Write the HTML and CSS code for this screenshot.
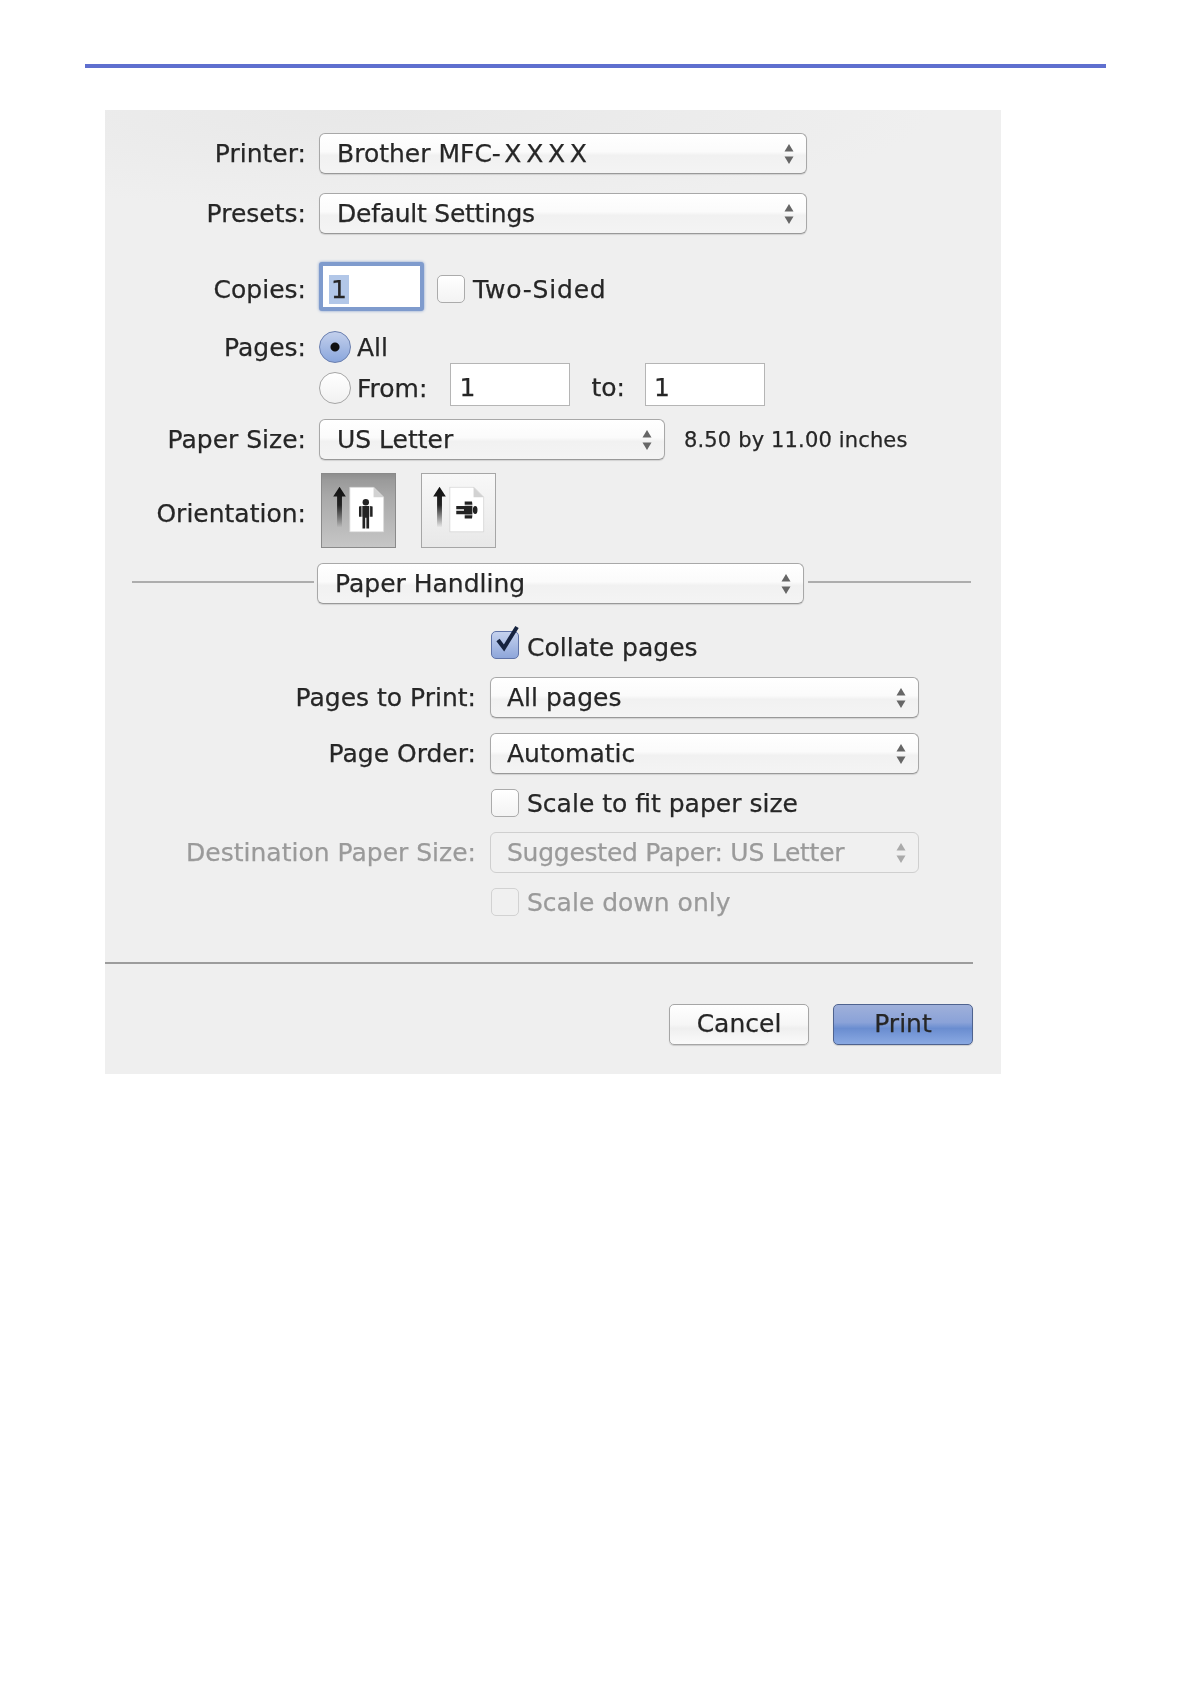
FILE: index.html
```html
<!DOCTYPE html>
<html lang="en">
<head>
<meta charset="utf-8">
<title>Print dialog</title>
<link rel="stylesheet" href="styles.css">
</head>
<body>
<svg class="defs" width="0" height="0" aria-hidden="true">
  <defs>
    <symbol id="stepper" viewBox="0 0 10 22">
      <path d="M5 1 L9.5 8.5 H0.5 Z"/>
      <path d="M5 21 L9.5 13.5 H0.5 Z"/>
    </symbol>
    <linearGradient id="arrowfade" x1="0" y1="0" x2="0" y2="1">
      <stop offset="0" stop-color="#111"/>
      <stop offset=".45" stop-color="#222"/>
      <stop offset="1" stop-color="#222" stop-opacity="0"/>
    </linearGradient>
    <symbol id="arrow" viewBox="0 0 14 42">
      <path d="M7 0 L13.5 10 H9.5 V42 H4.5 V10 H0.5 Z" fill="url(#arrowfade)"/>
    </symbol>
    <symbol id="sheet" viewBox="0 0 36 47">
      <path d="M0.5 0.5 H25 L35.5 11 V46.5 H0.5 Z" fill="#fff" stroke="#d4d4d4"/>
      <path d="M25 0.5 V11 H35.5 Z" fill="#d2d2d2"/>
    </symbol>
    <symbol id="person" viewBox="-8 -16 16 32">
      <circle cx="0" cy="-12" r="3.3"/>
      <path d="M-3.6 -8 H3.6 V3 H3.4 V15 H0.6 V4 H-0.6 V15 H-3.4 V3 H-3.6 Z"/>
      <path d="M-7 -7.5 L-4.4 -8 V3 H-7 Z"/>
      <path d="M7 -7.5 L4.4 -8 V3 H7 Z"/>
    </symbol>
  </defs>
</svg>

<div class="top-bar"></div>

<main class="dialog">
  <div class="row">
    <span class="label">Printer:</span>
    <div class="select select-wide"><span>Brother MFC<span class="wide-part">-XXXX</span></span><svg class="stepper"><use href="#stepper"/></svg></div>
  </div>
  <div class="row row-presets">
    <span class="label">Presets:</span>
    <div class="select select-wide"><span class="tight">Default Settings</span><svg class="stepper"><use href="#stepper"/></svg></div>
  </div>
  <div class="row row-copies">
    <span class="label">Copies:</span>
    <div class="copies-input"><span class="selected-text">1</span></div>
    <span class="check check-two"></span>
    <span class="check-text wide-text">Two-Sided</span>
  </div>
  <div class="row row-all">
    <span class="label">Pages:</span>
    <span class="radio radio-on"></span>
    <span class="radio-text">All</span>
  </div>
  <div class="row row-from">
    <span class="label"></span>
    <span class="radio"></span>
    <span class="radio-text from-text">From:</span>
    <div class="field field-from">1</div>
    <span class="to-text">to:</span>
    <div class="field">1</div>
  </div>
  <div class="row row-paper">
    <span class="label">Paper Size:</span>
    <div class="select select-paper"><span>US Letter</span><svg class="stepper"><use href="#stepper"/></svg></div>
    <span class="paper-note">8.50 by 11.00 inches</span>
  </div>
  <div class="row row-orient">
    <span class="label label-orient">Orientation:</span>
    <div class="orient orient-on">
      <svg viewBox="0 0 75 75" width="73" height="73">
        <use href="#arrow" x="11" y="13" width="14" height="42"/>
        <use href="#sheet" x="28" y="13" width="36" height="47"/>
        <use class="figure" href="#person" x="37" y="25" width="16" height="32"/>
      </svg>
    </div>
    <div class="orient">
      <svg viewBox="0 0 75 75" width="73" height="73">
        <use href="#arrow" x="11" y="13" width="14" height="42"/>
        <use href="#sheet" x="28" y="13" width="36" height="47"/>
        <g transform="translate(46 37) rotate(90) scale(1.25 .72)">
          <use class="figure" href="#person" x="-8" y="-16" width="16" height="32"/>
        </g>
      </svg>
    </div>
  </div>
  <div class="row row-handling">
    <span class="rule-line rule-left"></span>
    <div class="select select-handling"><span>Paper Handling</span><svg class="stepper"><use href="#stepper"/></svg></div>
    <span class="rule-line rule-right"></span>
  </div>
  <div class="row row-check row-collate">
    <span class="label label-sub"></span>
    <span class="check check-on">
      <svg class="tick" viewBox="0 0 28 32"><path d="M6 15 L12 23 L25 2"/></svg>
    </span>
    <span class="check-text collate-text">Collate pages</span>
  </div>
  <div class="row row-sub-first">
    <span class="label label-sub">Pages to Print:</span>
    <div class="select select-sub"><span>All pages</span><svg class="stepper"><use href="#stepper"/></svg></div>
  </div>
  <div class="row row-sub">
    <span class="label label-sub">Page Order:</span>
    <div class="select select-sub"><span>Automatic</span><svg class="stepper"><use href="#stepper"/></svg></div>
  </div>
  <div class="row row-check row-sub">
    <span class="label label-sub"></span>
    <span class="check"></span>
    <span class="check-text">Scale to fit paper size</span>
  </div>
  <div class="row row-sub row-disabled">
    <span class="label label-sub">Destination Paper Size:</span>
    <div class="select select-sub"><span class="tight">Suggested Paper: US Letter</span><svg class="stepper"><use href="#stepper"/></svg></div>
  </div>
  <div class="row row-check row-sub row-disabled">
    <span class="label label-sub"></span>
    <span class="check"></span>
    <span class="check-text">Scale down only</span>
  </div>
  <div class="bottom-rule"></div>
  <div class="actions">
    <div class="button">Cancel</div>
    <div class="button button-primary">Print</div>
  </div>
</main>
</body>
</html>
```

FILE: styles.css
```css
* {
  box-sizing: border-box;
}

html,
body {
  margin: 0;
  padding: 0;
  background: #fff;
}

body {
  width: 1191px;
  height: 1684px;
  overflow: hidden;
  font-family: "DejaVu Sans", "Liberation Sans", sans-serif;
  font-size: 25px;
  color: #262626;
  -webkit-text-stroke: 0.25px currentColor;
}

.defs {
  display: block;
  height: 0;
}

.top-bar {
  width: 1021px;
  height: 4px;
  margin: 64px 0 0 85px;
  background: #5f6fcf;
}

.dialog {
  width: 896px;
  height: 964px;
  margin: 42px 0 0 105px;
  padding-top: 23px;
  background:
    radial-gradient(ellipse 560px 100px at 30% 0, #e8e8e8, rgba(232, 232, 232, 0)),
    #efefef;
  filter: blur(0.55px);
}

.row {
  display: flex;
  align-items: center;
}

.label {
  flex: none;
  width: 201px;
  margin-right: 13px;
  text-align: right;
  white-space: nowrap;
}

.label-sub {
  width: 371px;
  margin-right: 14px;
}

.label-orient {
  padding-top: 6px;
}

.row-presets {
  margin-top: 19px;
}

.row-copies {
  margin-top: 28px;
  height: 49px;
}

.row-copies .label,
.row-copies .check-text {
  padding-top: 5px;
}

.row-all {
  margin-top: 20px;
  height: 32px;
}

.row-from {
  height: 43px;
}

.row-from .radio,
.row-from .from-text {
  margin-top: 7px;
}

.row-paper {
  margin-top: 13px;
}

.row-orient {
  margin-top: 13px;
}

.row-handling {
  margin-top: 15px;
  padding: 0 30px 0 27px;
  height: 41px;
}

.row-check {
  height: 28px;
}

.row-collate {
  margin-top: 27px;
}

.row-sub-first {
  margin-top: 18px;
}

.row-sub {
  margin-top: 15px;
}

.row-disabled {
  color: #9a9a9a;
}

.select {
  flex: none;
  display: flex;
  align-items: center;
  justify-content: space-between;
  height: 41px;
  padding: 0 12px 0 17px;
  border: 1.5px solid #a8a8a8;
  border-bottom-color: #999;
  border-radius: 6px;
  background: linear-gradient(#fff 0, #fbfbfb 45%, #f1f1f1 55%, #f4f4f4 100%);
  box-shadow: 0 1px 1px rgba(0, 0, 0, 0.12);
  white-space: nowrap;
}

.select-sub {
  width: 429px;
  padding-left: 16px;
}

.wide-part {
  letter-spacing: 4.7px;
}

.tight {
  letter-spacing: -0.25px;
}

.wide-text {
  letter-spacing: 0.8px;
}

.select-wide {
  width: 488px;
}

.select-paper {
  width: 346px;
}

.select-handling {
  width: 487px;
}

.row-disabled .select {
  border-color: #cfcfcf;
  background: #f0f0f0;
  box-shadow: none;
}

.stepper {
  flex: none;
  width: 10px;
  height: 22px;
  fill: #666;
}

.row-disabled .stepper {
  fill: #aaa;
}

.copies-input {
  flex: none;
  width: 105px;
  height: 49px;
  padding: 9px 6px 0;
  border: 4px solid #7f9bcd;
  border-radius: 3px;
  background: #fff;
  box-shadow: 0 0 3px #7f9bcd;
  line-height: 29px;
}

.selected-text {
  display: inline-block;
  padding: 0 2px;
  background: #b2c7e8;
}

.check {
  flex: none;
  position: relative;
  width: 28px;
  height: 28px;
  margin-left: 1px;
  border: 1.5px solid #ababab;
  border-radius: 5px;
  background: linear-gradient(#fff, #f3f3f3);
}

.check-two {
  margin: 4px 0 0 13px;
}

.row-disabled .check {
  border-color: #d2d2d2;
  background: #f0f0f0;
}

.check-on {
  border-color: #5f73a8;
  background: linear-gradient(#c5d2ee, #8ea6da);
}

.tick {
  position: absolute;
  left: 0;
  top: -7px;
  width: 28px;
  height: 32px;
  fill: none;
  stroke: #16233f;
  stroke-width: 4;
}

.check-text {
  margin-left: 8px;
  white-space: nowrap;
}

.collate-text {
  padding-top: 4px;
}

.radio {
  flex: none;
  width: 32px;
  height: 32px;
  border: 1.5px solid #a6a6a6;
  border-radius: 50%;
  background: linear-gradient(#fff, #f1f1f1);
}

.radio-on {
  border-color: #6a7faf;
  background:
    radial-gradient(circle at center, #111 0 4px, rgba(0, 0, 0, 0) 5px),
    linear-gradient(#c3d0ec, #8aa6dc);
}

.radio-text {
  margin-left: 6px;
  white-space: nowrap;
}

.field {
  flex: none;
  width: 120px;
  height: 43px;
  padding: 4px 0 0 8px;
  border: 1.5px solid #b5b5b5;
  background: #fff;
  line-height: 40px;
}

.field-from {
  margin-left: 23px;
}

.to-text {
  margin: 6px 20px 0 21px;
}

.paper-note {
  margin-left: 19px;
  font-size: 21px;
  letter-spacing: 0.15px;
  white-space: nowrap;
}

.orient {
  flex: none;
  display: flex;
  width: 75px;
  height: 75px;
  margin-left: 2px;
  border: 1.5px solid #a6a6a6;
  background: linear-gradient(#f8f8f8, #e8e8e8);
}

.orient + .orient {
  margin-left: 25px;
}

.orient-on {
  border-color: #8a8a8a;
  background: linear-gradient(#8e8e8e 0, #9a9a9a 8%, #a8a8a8 30%, #c6c6c6 100%);
}

.figure {
  fill: #222;
}

.rule-line {
  height: 2px;
  margin-bottom: 4px;
  background: #adadad;
}

.rule-left {
  flex: none;
  width: 182px;
  margin-right: 3px;
}

.rule-right {
  flex: 1;
  margin-left: 4px;
}

.bottom-rule {
  width: 868px;
  height: 2px;
  margin-top: 46px;
  background: #9c9c9c;
}

.actions {
  display: flex;
  justify-content: flex-end;
  gap: 24px;
  width: 868px;
  margin-top: 40px;
}

.button {
  width: 140px;
  height: 41px;
  border: 1.5px solid #a6a6a6;
  border-radius: 5px;
  background: linear-gradient(#fff, #f6f6f6 50%, #efefef 60%, #fafafa);
  box-shadow: 0 1px 1px rgba(0, 0, 0, 0.15);
  line-height: 38px;
  text-align: center;
}

.button-primary {
  border-color: #4f638f;
  background: linear-gradient(#9fb0da 0, #8aa2d8 45%, #6a8dd0 60%, #8aa9e2 100%);
}
```
